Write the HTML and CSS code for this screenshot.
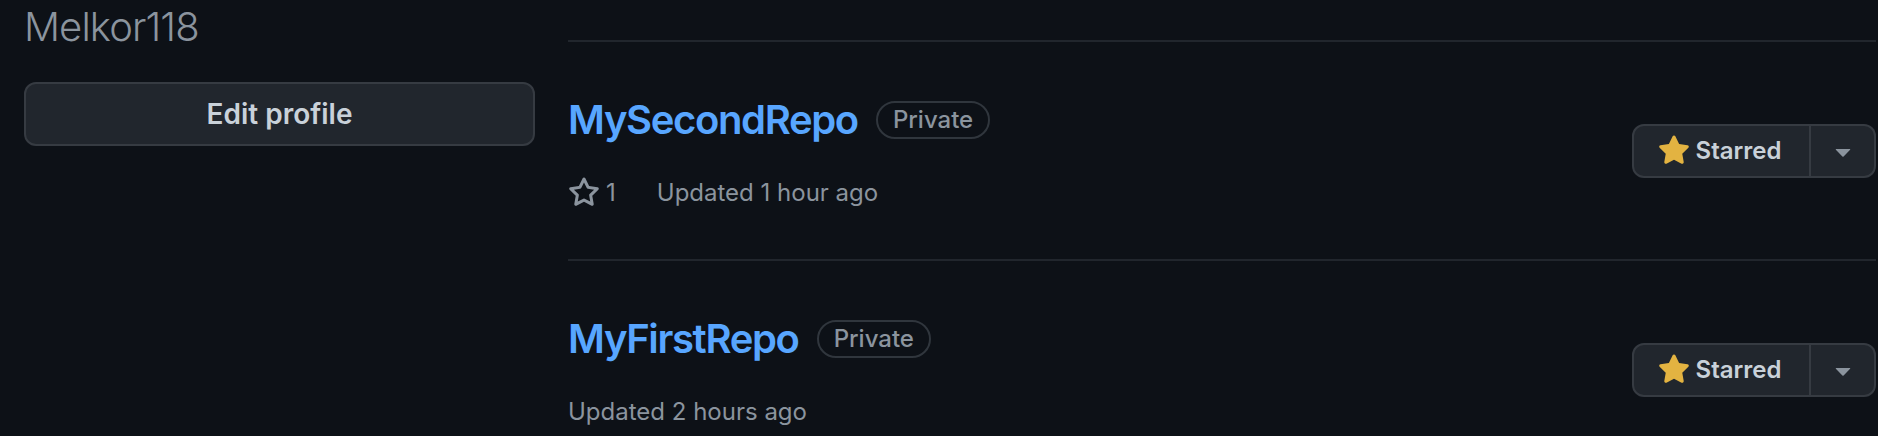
FILE: index.html
```html
<!DOCTYPE html>
<html lang="en">
<head>
<meta charset="utf-8">
<title>Melkor118 starred</title>
<link rel="stylesheet" href="styles.css">
</head>
<body>
<div class="layout">
  <aside class="sidebar">
    <h1 class="username">Melkor118</h1>
    <button class="btn btn-block" type="button">Edit profile</button>
  </aside>
  <main class="repos">
    <div class="repo">
      <div class="repo-info">
        <h3 class="repo-title"><a class="repo-name" href="#">MySecondRepo</a><span class="label">Private</span></h3>
        <div class="repo-meta">
          <a class="stars" href="#"><svg class="octicon" viewBox="0 0 16 16" width="32" height="32"><path d="M8 .25a.75.75 0 0 1 .673.418l1.882 3.815 4.21.612a.75.75 0 0 1 .416 1.279l-3.046 2.97.719 4.192a.751.751 0 0 1-1.088.791L8 12.347l-3.766 1.98a.75.75 0 0 1-1.088-.79l.72-4.194L.818 6.374a.75.75 0 0 1 .416-1.28l4.21-.611L7.327.668A.75.75 0 0 1 8 .25Zm0 2.445L6.615 5.5a.75.75 0 0 1-.564.41l-3.097.45 2.24 2.184a.75.75 0 0 1 .216.664l-.528 3.084 2.769-1.456a.75.75 0 0 1 .698 0l2.77 1.456-.53-3.084a.75.75 0 0 1 .216-.664l2.24-2.183-3.096-.45a.75.75 0 0 1-.564-.41L8 2.694Z"/></svg>1</a>
          <span class="updated">Updated 1 hour ago</span>
        </div>
      </div>
      <div class="star-group">
        <button class="btn star-btn" type="button"><svg class="octicon star-fill" viewBox="0 0 16 16" width="32" height="32"><path d="M8 .25a.75.75 0 0 1 .673.418l1.882 3.815 4.21.612a.75.75 0 0 1 .416 1.279l-3.046 2.97.719 4.192a.751.751 0 0 1-1.088.791L8 12.347l-3.766 1.98a.75.75 0 0 1-1.088-.79l.72-4.194L.818 6.374a.75.75 0 0 1 .416-1.28l4.21-.611L7.327.668A.75.75 0 0 1 8 .25Z"/></svg><span>Starred</span></button>
        <button class="btn caret-btn" type="button" aria-label="Lists"><svg class="octicon" viewBox="0 0 16 16" width="32" height="32"><path d="m4.427 7.427 3.396 3.396a.25.25 0 0 0 .354 0l3.396-3.396A.25.25 0 0 0 11.396 7H4.604a.25.25 0 0 0-.177.427Z"/></svg></button>
      </div>
    </div>
    <div class="repo">
      <div class="repo-info">
        <h3 class="repo-title"><a class="repo-name" href="#">MyFirstRepo</a><span class="label">Private</span></h3>
        <div class="repo-meta">
          <span class="updated">Updated 2 hours ago</span>
        </div>
      </div>
      <div class="star-group">
        <button class="btn star-btn" type="button"><svg class="octicon star-fill" viewBox="0 0 16 16" width="32" height="32"><path d="M8 .25a.75.75 0 0 1 .673.418l1.882 3.815 4.21.612a.75.75 0 0 1 .416 1.279l-3.046 2.97.719 4.192a.751.751 0 0 1-1.088.791L8 12.347l-3.766 1.98a.75.75 0 0 1-1.088-.79l.72-4.194L.818 6.374a.75.75 0 0 1 .416-1.28l4.21-.611L7.327.668A.75.75 0 0 1 8 .25Z"/></svg><span>Starred</span></button>
        <button class="btn caret-btn" type="button" aria-label="Lists"><svg class="octicon" viewBox="0 0 16 16" width="32" height="32"><path d="m4.427 7.427 3.396 3.396a.25.25 0 0 0 .354 0l3.396-3.396A.25.25 0 0 0 11.396 7H4.604a.25.25 0 0 0-.177.427Z"/></svg></button>
      </div>
    </div>
  </main>
</div>
</body>
</html>
```
FILE: styles.css
```css
* { box-sizing: border-box; }

html, body {
  margin: 0;
  background: #0d1117;
  height: 100%;
}

body {
  font-family: Inter, "Noto Sans", "Liberation Sans", sans-serif;
  color: #c9d1d9;
  overflow: hidden;
}

.layout {
  display: flex;
  align-items: flex-start;
  padding-left: 24px;
}

.sidebar {
  width: 511px;
  flex: none;
  padding-top: 3px;
}

.username {
  margin: 0;
  font-size: 40px;
  line-height: 48px;
  font-weight: 300;
  color: #8b949e;
  letter-spacing: -0.9px;
}

.btn {
  font-family: inherit;
  background: #21262d;
  color: #c9d1d9;
  border: 2px solid #363b42;
  font-weight: 500;
  cursor: pointer;
}

.btn-block {
  display: block;
  width: 100%;
  height: 64px;
  margin-top: 31px;
  border-radius: 12px;
  font-size: 28px;
  font-weight: 600;
}

.repos {
  width: 1308px;
  margin-left: 33px;
  padding-top: 40px;
}

.repo {
  display: flex;
  align-items: center;
  justify-content: space-between;
  border-top: 2px solid #21262d;
  padding: 48px 0;
}

.repo-title {
  margin: 0;
  display: flex;
  align-items: center;
  height: 60px;
  font-size: 40px;
  line-height: 60px;
  font-weight: 600;
}

.repo-name {
  color: #58a6ff;
  text-decoration: none;
  letter-spacing: -1.35px;
}

.label {
  display: inline-block;
  margin-left: 18px;
  padding: 0 15px;
  height: 38px;
  line-height: 34px;
  border: 2px solid #30363d;
  border-radius: 999px;
  font-size: 24px;
  font-weight: 500;
  color: #8b949e;
}

.repo-meta {
  display: flex;
  align-items: center;
  margin-top: 25px;
  height: 36px;
  font-size: 24px;
  line-height: 36px;
  color: #8b949e;
}

.stars {
  display: inline-flex;
  align-items: center;
  gap: 6px;
  color: #8b949e;
  text-decoration: none;
  margin-right: 41px;
}

.octicon {
  display: block;
  fill: currentColor;
  flex: none;
}

.star-group {
  display: flex;
  height: 54px;
}

.star-btn {
  display: flex;
  align-items: center;
  justify-content: center;
  gap: 6px;
  width: 179px;
  height: 54px;
  padding: 0 4px 0 0;
  border-radius: 12px 0 0 12px;
  font-size: 24px;
  font-weight: 600;
}

.star-fill {
  fill: #e3b341;
}

.caret-btn {
  display: flex;
  align-items: center;
  justify-content: center;
  width: 65px;
  height: 54px;
  padding: 0;
  border-left: none;
  border-radius: 0 12px 12px 0;
  color: #8b949e;
}
```
